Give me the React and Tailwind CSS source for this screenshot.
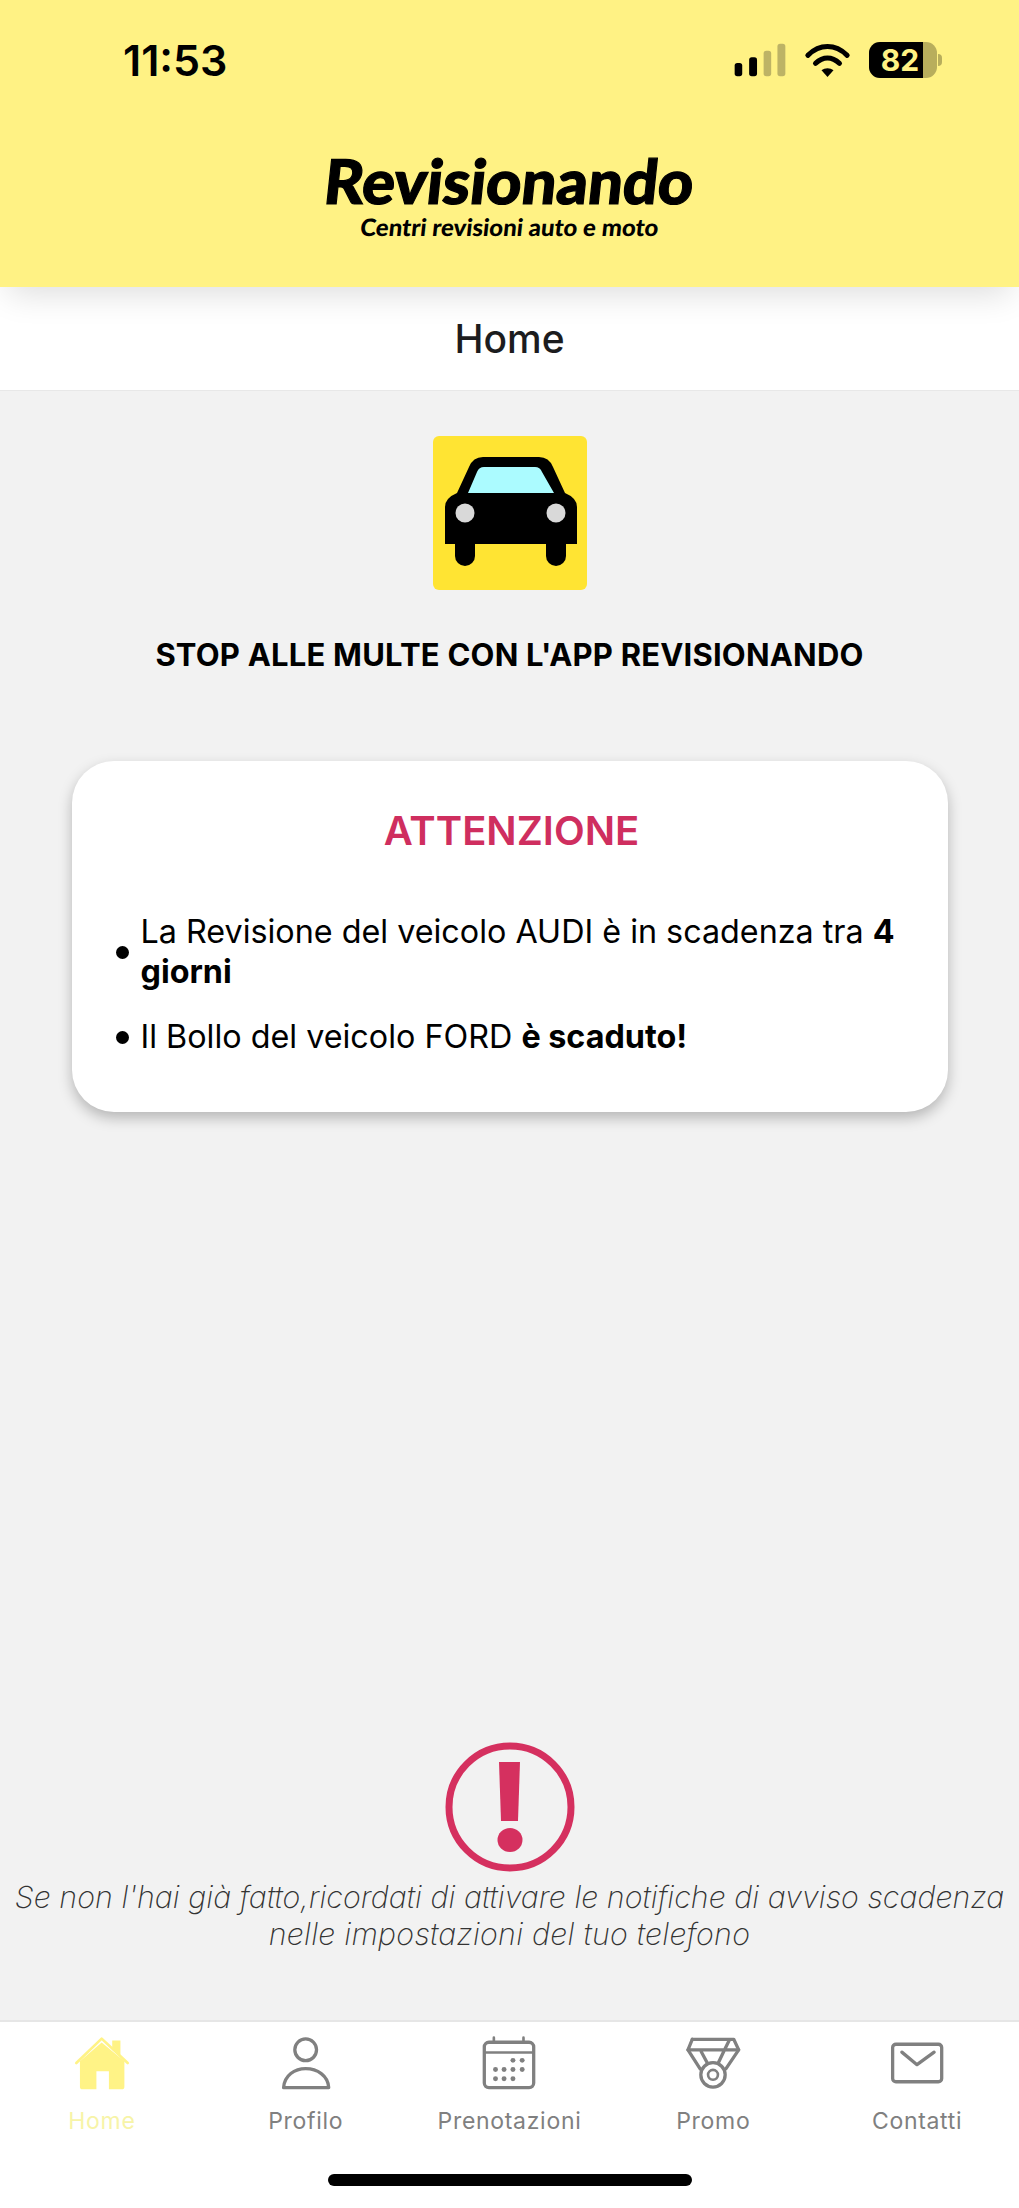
import React from 'react';

function SignalIcon() {
  return (
    <svg viewBox="100 70 158 102" className="w-[52px] h-[34px]">
      <rect x="102" y="130" width="23" height="40" rx="8" fill="#000" />
      <rect x="146" y="113" width="24" height="57" rx="8" fill="#000" />
      <rect x="190" y="93" width="23" height="77" rx="8" fill="#bdb365" />
      <rect x="232" y="72" width="24" height="98" rx="8" fill="#bdb365" />
    </svg>
  );
}

function WifiIcon() {
  return (
    <svg viewBox="308 65 140 108" className="w-[47px] h-[36px]">
      <path d="M319 105 C355 70 401 70 437 105" fill="none" stroke="#000" strokeWidth="15" strokeLinecap="round" />
      <path d="M342 129 C365 108 391 108 414 129" fill="none" stroke="#000" strokeWidth="15" strokeLinecap="round" />
      <path d="M360 150 C370 142 386 142 396 150 L378 170 Z" fill="#000" />
    </svg>
  );
}

function Battery() {
  return (
    <div className="flex items-center">
      <div className="flex h-[36px] w-[68px] overflow-hidden rounded-[11px] bg-[#b8ae5c]">
        <div className="flex w-[54px] items-center justify-center bg-black pl-[8px] text-[30px] font-bold text-[#fff284]">
          82
        </div>
      </div>
      <div className="ml-[1px] h-[12px] w-[4px] rounded-r-full bg-[#b8ae5c]" />
    </div>
  );
}

function CarLogo() {
  return (
    <svg viewBox="0 0 154 154" className="h-[154px] w-[154px]">
      <rect width="154" height="154" rx="6" fill="#ffe433" />
      <rect x="22" y="95" width="20" height="35" rx="10" fill="#000" />
      <rect x="113" y="95" width="20" height="35" rx="10" fill="#000" />
      <path d="M12 71 Q12 62 24 57 L36 31 Q40 21 50 21 H106 Q116 21 120 31 L132 57 Q144 62 144 71 V108 H12 Z" fill="#000" />
      <path d="M35 57 L44 36 Q46 31 51 31 H102 Q107 31 109 36 L121 57 Z" fill="#abfbff" />
      <circle cx="32" cy="77" r="9.5" fill="#d9d9d9" />
      <circle cx="123" cy="77" r="9.5" fill="#d9d9d9" />
    </svg>
  );
}

function AlertIcon() {
  return (
    <svg viewBox="0 0 130 132" className="h-[132px] w-[130px]">
      <circle cx="65" cy="66" r="61" fill="none" stroke="#d5305f" strokeWidth="7" />
      <path d="M54 21 H75 L73 80 H56 Z" fill="#d5305f" />
      <ellipse cx="65" cy="99" rx="12.5" ry="12" fill="#d5305f" />
    </svg>
  );
}

function HomeIcon() {
  return (
    <svg viewBox="220 108 168 164" className="h-[54px] w-[56px]">
      <path d="M335 122 H360 V170 L335 150 Z" fill="#fff386" />
      <path d="M237 185 L303 128 L372 185 V262 Q372 270 364 270 H325 V215 H287 V270 H245 Q237 270 237 262 Z" fill="#fff386" />
      <path d="M226 190 L303 116 L382 190" fill="none" stroke="#fff386" strokeWidth="8" strokeLinecap="round" strokeLinejoin="round" />
    </svg>
  );
}

function ProfileIcon() {
  return (
    <svg viewBox="838 108 156 164" className="h-[54px] w-[52px]">
      <circle cx="915" cy="150" r="33" fill="none" stroke="#808080" strokeWidth="10" />
      <path d="M848 265 C850 228 882 207 915 207 C950 207 983 228 985 265 Z" fill="none" stroke="#808080" strokeWidth="10" strokeLinejoin="round" />
    </svg>
  );
}

function CalendarIcon() {
  const dots = [
    [1540, 182], [1568, 182],
    [1487, 210], [1513, 210], [1540, 210], [1568, 210],
    [1487, 238], [1513, 238], [1540, 238],
  ];
  return (
    <svg viewBox="1446 108 164 164" className="h-[54px] w-[54px]">
      <rect x="1453" y="127" width="150" height="138" rx="14" fill="none" stroke="#808080" strokeWidth="10" />
      <path d="M1453 158 H1603" stroke="#808080" strokeWidth="8" />
      <path d="M1482 113 V127 M1572 113 V127" stroke="#808080" strokeWidth="8" strokeLinecap="round" />
      {dots.map(([cx, cy]) => (
        <circle key={cx + '-' + cy} cx={cx} cy={cy} r="7.5" fill="#808080" />
      ))}
    </svg>
  );
}

function MedalIcon() {
  return (
    <svg viewBox="522 108 168 164" className="h-[54px] w-[56px]">
      <path d="M543 118 H669 L684 150 L645 208 M567 208 L530 150 Z" fill="none" stroke="#808080" strokeWidth="10" strokeLinejoin="round" strokeLinecap="round" />
      <path d="M530 150 H684 M543 118 L530 150 M655 122 L640 152 L622 190 M570 155 L590 192" fill="none" stroke="#808080" strokeWidth="10" strokeLinecap="round" />
      <circle cx="606" cy="226" r="37" fill="none" stroke="#808080" strokeWidth="10" />
      <circle cx="606" cy="226" r="15" fill="none" stroke="#808080" strokeWidth="8" />
    </svg>
  );
}

function MailIcon() {
  return (
    <svg viewBox="1136 108 164 164" className="h-[54px] w-[54px]">
      <rect x="1144" y="133" width="149" height="114" rx="10" fill="none" stroke="#808080" strokeWidth="10" />
      <path d="M1172 157 L1218 195 L1270 157" fill="none" stroke="#808080" strokeWidth="10" strokeLinecap="round" strokeLinejoin="round" />
    </svg>
  );
}

const tabs = [
  { label: 'Home', Icon: HomeIcon, active: true },
  { label: 'Profilo', Icon: ProfileIcon },
  { label: 'Prenotazioni', Icon: CalendarIcon },
  { label: 'Promo', Icon: MedalIcon },
  { label: 'Contatti', Icon: MailIcon },
];

export default function App() {
  return (
    <div className="flex h-[2208px] w-[1019px] flex-col overflow-hidden bg-[#f2f2f2] font-['Inter',sans-serif]">
      <header className="relative z-10 h-[287px] bg-[#fff284] shadow-[0_14px_32px_-8px_rgba(0,0,0,0.14)]">
        <div className="flex items-center justify-between pl-[123px] pr-[77px] pt-[42px]">
          <span className="text-[43px] leading-[36px] font-semibold text-black">11:53</span>
          <div className="flex items-center gap-[18px]">
            <SignalIcon />
            <WifiIcon />
            <Battery />
          </div>
        </div>
        <div className="mt-[72px] text-center text-black">
          <div className="-skew-x-6 font-['Lato',sans-serif] text-[61.5px] leading-[60px] font-black [-webkit-text-stroke:1.2px_#000]">Revisionando</div>
          <div className="mt-[4px] -skew-x-6 font-['Lato',sans-serif] text-[24px] leading-[26px] font-black">Centri revisioni auto e moto</div>
        </div>
      </header>

      <div className="flex h-[104px] items-center justify-center border-b border-[#e8e8e8] bg-white">
        <h1 className="pt-[2px] text-[39px] font-medium text-[#1c1c1e]">Home</h1>
      </div>

      <main className="flex flex-1 flex-col items-center">
        <div className="mt-[45px]">
          <CarLogo />
        </div>
        <p className="mt-[47px] text-[31px] leading-[36px] tracking-[0.2px] font-bold text-black">STOP ALLE MULTE CON L'APP REVISIONANDO</p>

        <section className="mt-[88px] h-[351px] w-[876px] rounded-[42px] bg-white pl-[44px] pr-[40px] pt-[50px] shadow-[0_6px_14px_rgba(0,0,0,0.25)]">
          <h2 className="text-center text-[40px] leading-[40px] font-semibold text-[#cf2e5f]">ATTENZIONE</h2>
          <ul className="mt-[61px] text-[32.3px] leading-[40px] text-black">
            <li className="flex items-center gap-[12px]">
              <span className="h-[13px] w-[13px] shrink-0 rounded-full bg-black" />
              <span>La Revisione del veicolo AUDI è in scadenza tra <b>4 giorni</b></span>
            </li>
            <li className="mt-[25px] flex items-center gap-[12px]">
              <span className="h-[13px] w-[13px] shrink-0 rounded-full bg-black" />
              <span>Il Bollo del veicolo FORD <b>è scaduto!</b></span>
            </li>
          </ul>
        </section>

        <div className="mt-auto mb-[67px] flex flex-col items-center">
          <AlertIcon />
          <p className="mt-[6px] whitespace-nowrap text-center text-[30.4px] leading-[37px] font-extralight text-[#333333] italic">
            <span className="tracking-[0.03px]">Se non l'hai già fatto,ricordati di attivare le notifiche di avviso scadenza</span>
            <br />
            <span className="tracking-[0.25px]">nelle impostazioni del tuo telefono</span>
          </p>
        </div>
      </main>

      <nav className="h-[188px] border-t-2 border-[#e6e6e6] bg-white">
        <div className="grid grid-cols-5 pt-[14px]">
          {tabs.map(({ label, Icon, active }) => (
            <div key={label} className="flex flex-col items-center">
              <Icon />
              <span className={`mt-[16px] text-[23px] leading-[30px] tracking-[0.7px] ${active ? 'text-[#f7f4a8]' : 'text-[#808080]'}`}>
                {label}
              </span>
            </div>
          ))}
        </div>
        <div className="mx-auto mt-[38px] h-[12px] w-[364px] rounded-full bg-black" />
      </nav>
    </div>
  );
}
